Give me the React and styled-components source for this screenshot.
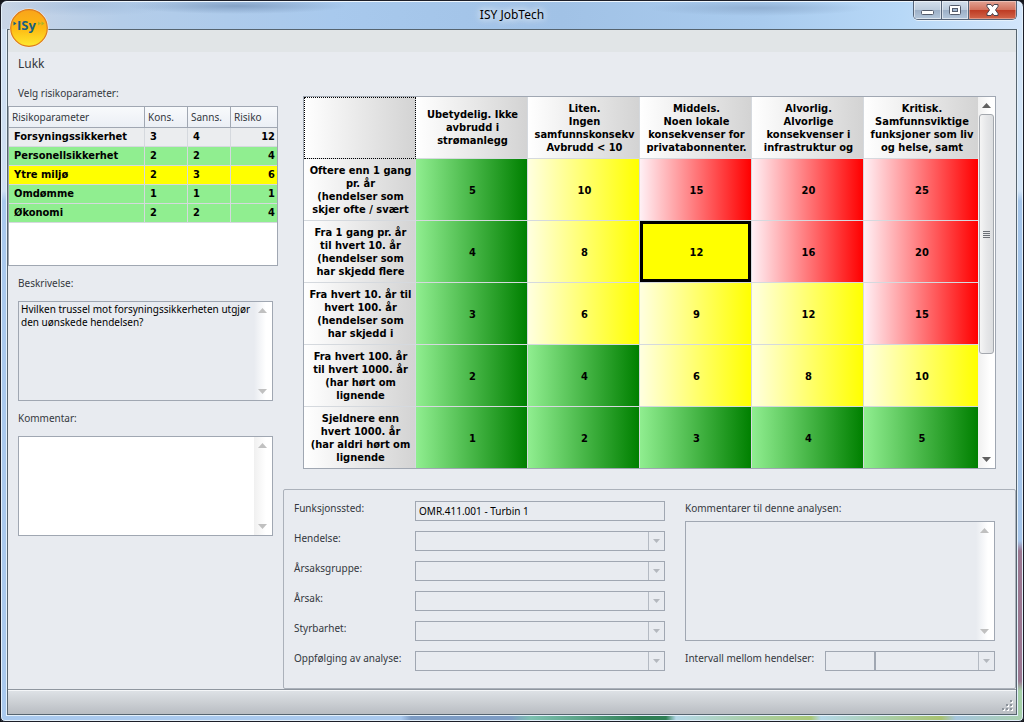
import { useState } from "react";
import styled, { createGlobalStyle, css } from "styled-components";

const risks = [
  { name: "Forsyningssikkerhet", kons: 3, sanns: 4, risiko: 12, color: "#ebedef" },
  { name: "Personellsikkerhet", kons: 2, sanns: 2, risiko: 4, color: "#90ee90" },
  { name: "Ytre miljø", kons: 2, sanns: 3, risiko: 6, color: "#ffff00" },
  { name: "Omdømme", kons: 1, sanns: 1, risiko: 1, color: "#90ee90" },
  { name: "Økonomi", kons: 2, sanns: 2, risiko: 4, color: "#90ee90" },
];

const consequences = [
  "Ubetydelig. Ikke\navbrudd i\nstrømanlegg",
  "Liten.\nIngen\nsamfunnskonsekv\nAvbrudd < 10",
  "Middels.\nNoen lokale\nkonsekvenser for\nprivatabonnenter.",
  "Alvorlig.\nAlvorlige\nkonsekvenser i\ninfrastruktur og",
  "Kritisk.\nSamfunnsviktige\nfunksjoner som liv\nog helse, samt",
];

// g = green, y = yellow, r = red
const matrix = [
  { label: "Oftere enn 1 gang\npr. år\n(hendelser som\nskjer ofte / svært", cells: [[5, "g"], [10, "y"], [15, "r"], [20, "r"], [25, "r"]] },
  { label: "Fra 1 gang pr. år\ntil hvert 10. år\n(hendelser som\nhar skjedd flere", cells: [[4, "g"], [8, "y"], [12, "y"], [16, "r"], [20, "r"]] },
  { label: "Fra hvert 10. år til\nhvert 100. år\n(hendelser som\nhar skjedd i", cells: [[3, "g"], [6, "y"], [9, "y"], [12, "y"], [15, "r"]] },
  { label: "Fra hvert 100. år\ntil hvert 1000. år\n(har hørt om\nlignende", cells: [[2, "g"], [4, "g"], [6, "y"], [8, "y"], [10, "y"]] },
  { label: "Sjeldnere enn\nhvert 1000. år\n(har aldri hørt om\nlignende", cells: [[1, "g"], [2, "g"], [3, "g"], [4, "g"], [5, "g"]] },
];

const selects = [
  ["hendelse", "Hendelse:"],
  ["arsaksgruppe", "Årsaksgruppe:"],
  ["arsak", "Årsak:"],
  ["styrbarhet", "Styrbarhet:"],
  ["oppfolging", "Oppfølging av analyse:"],
];

const fills = {
  g: "linear-gradient(to right, #90ee90, #008000)",
  y: "linear-gradient(to right, #ffffe0, #ffff00)",
  r: "linear-gradient(to right, #fff0f5, #ff0000)",
};

function Logo() {
  return (
    <LogoSvg viewBox="0 0 40 40" role="img" aria-label="ISY">
      <defs>
        <linearGradient id="sun" x1="0" y1="0" x2="0" y2="1">
          <stop offset="0" stopColor="#f9a41a" />
          <stop offset="0.5" stopColor="#fdb913" />
          <stop offset="1" stopColor="#ffe92e" />
        </linearGradient>
      </defs>
      <circle cx="20" cy="20" r="19.5" fill="#f4efe6" />
      <circle cx="20" cy="20" r="18.3" fill="url(#sun)" stroke="#dd7a1c" strokeWidth="1.2" />
      <path d="M4.500 13.500l3 2-3 2z" fill="#17607f" />
      <text x="8" y="22" fill="#17607f">ISy</text>
      <path d="M29 13.500l3 2-3 2zM32.500 13.500l3 2-3 2z" fill="#a9b52a" />
    </LogoSvg>
  );
}

function Arrow({ down }) {
  return (
    <svg width="9" height="5" viewBox="0 0 9 5" aria-hidden="true">
      <path d={down ? "M0 0h9L4.5 5z" : "M0 5h9L4.5 0z"} fill="currentColor" />
    </svg>
  );
}

function Memo({ id, height, white, ...rest }) {
  return (
    <MemoBox $height={height} $white={white}>
      <textarea id={id} {...rest} />
      <MemoScroll $white={white}>
        <Arrow />
        <Arrow down />
      </MemoScroll>
    </MemoBox>
  );
}

function Combo({ id, label }) {
  return (
    <ComboBox>
      <select id={id} aria-label={label} disabled />
      <ComboArrow>
        <svg width="7" height="4" viewBox="0 0 7 4" aria-hidden="true">
          <path d="M0 0h7L3.5 4z" fill="currentColor" />
        </svg>
      </ComboArrow>
    </ComboBox>
  );
}

function App() {
  const [comment, setComment] = useState("");

  return (
    <Window>
      <GlobalStyle />
      <TitleBar>
        <Logo />
        <Title>ISY JobTech</Title>
        <WindowButtons>
          <WindowButton $width={28} aria-label="Minimer">
            <svg width="13" height="12" viewBox="0 0 13 12">
              <rect x="0.5" y="6.5" width="12" height="4" rx="1" fill="#fff" stroke="#545c6c" />
            </svg>
          </WindowButton>
          <WindowButton $width={27} aria-label="Maksimer">
            <svg width="12" height="10" viewBox="0 0 12 10">
              <rect x="0.5" y="0.5" width="11" height="9" rx="1" fill="#fff" stroke="#545c6c" />
              <rect x="3.5" y="3.5" width="5" height="3" fill="#9fb6d0" stroke="#545c6c" />
            </svg>
          </WindowButton>
          <WindowButton $width={47} $close aria-label="Lukk vindu">
            <svg width="13" height="12" viewBox="0 0 13 12">
              <path d="M1 .5h4l1.500 2 1.500-2h4v2L9.500 6l2.500 3.500v2H8l-1.500-2-1.500 2H1v-2L3.500 6 1 2.500z" fill="#fff" stroke="#4b4550" />
            </svg>
          </WindowButton>
        </WindowButtons>
      </TitleBar>

      <Client>
        <Ribbon />
        <MenuBar>
          <MenuItem>Lukk</MenuItem>
        </MenuBar>

        <Main>
          <Side>
            <SideLabel as="h2">Velg risikoparameter:</SideLabel>
            <RiskBox>
              <RiskTable>
                <colgroup>
                  <col />
                  <col width="43" />
                  <col width="43" />
                  <col width="46" />
                </colgroup>
                <thead>
                  <tr>
                    <th>Risikoparameter</th>
                    <th>Kons.</th>
                    <th>Sanns.</th>
                    <th>Risiko</th>
                  </tr>
                </thead>
                <tbody>
                  {risks.map((r) => (
                    <RiskRow key={r.name} $color={r.color}>
                      <td>{r.name}</td>
                      <td>{r.kons}</td>
                      <td>{r.sanns}</td>
                      <td>{r.risiko}</td>
                    </RiskRow>
                  ))}
                </tbody>
              </RiskTable>
            </RiskBox>
            <Field>
              <SideLabel htmlFor="beskrivelse">Beskrivelse:</SideLabel>
              <Memo
                id="beskrivelse"
                height={100}
                readOnly
                value="Hvilken trussel mot forsyningssikkerheten utgjør den uønskede hendelsen?"
              />
            </Field>
            <Field>
              <SideLabel htmlFor="kommentar">Kommentar:</SideLabel>
              <Memo
                id="kommentar"
                height={100}
                white
                value={comment}
                onChange={(e) => setComment(e.target.value)}
              />
            </Field>
          </Side>

          <Content>
            <MatrixBox>
              <MatrixTable>
                <colgroup>
                  <col width="112" />
                  <col width="112" />
                  <col width="112" />
                  <col width="112" />
                  <col width="112" />
                  <col />
                </colgroup>
                <thead>
                  <tr>
                    <CornerCell />
                    {consequences.map((c) => (
                      <HeadCell key={c} scope="col">{c}</HeadCell>
                    ))}
                  </tr>
                </thead>
                <tbody>
                  {matrix.map((row) => (
                    <tr key={row.label}>
                      <HeadCell scope="row">{row.label}</HeadCell>
                      {row.cells.map(([value, level], i) => (
                        <RiskCell
                          key={i}
                          $level={level}
                          $selected={level === "y" && value === 12 && i === 2}
                        >
                          {value}
                        </RiskCell>
                      ))}
                    </tr>
                  ))}
                </tbody>
              </MatrixTable>
              <ScrollBar>
                <Arrow />
                <ScrollTrack>
                  <ScrollThumb>
                    <i />
                    <i />
                    <i />
                    <i />
                  </ScrollThumb>
                </ScrollTrack>
                <Arrow down />
              </ScrollBar>
            </MatrixBox>

            <Panel>
              <FormColumn>
                <FormRow>
                  <label htmlFor="funksjonssted">Funksjonssted:</label>
                  <TextBox id="funksjonssted" readOnly value="OMR.411.001 - Turbin 1" />
                </FormRow>
                {selects.map(([id, label]) => (
                  <FormRow key={id}>
                    <label htmlFor={id}>{label}</label>
                    <Combo id={id} />
                  </FormRow>
                ))}
              </FormColumn>
              <NotesColumn>
                <label htmlFor="notater">Kommentarer til denne analysen:</label>
                <Memo id="notater" height={120} readOnly value="" />
                <IntervalRow>
                  <label htmlFor="intervall">Intervall mellom hendelser:</label>
                  <TextBox id="intervall" readOnly value="" />
                  <Combo id="enhet" label="Enhet" />
                </IntervalRow>
              </NotesColumn>
            </Panel>
          </Content>
        </Main>

        <StatusBar>
          <svg width="12" height="12" viewBox="0 0 12 12" aria-hidden="true">
            <path d="M9 1h2v2H9zM5 5h2v2H5zM9 5h2v2H9zM1 9h2v2H1zM5 9h2v2H5zM9 9h2v2H9z" fill="#fff" />
            <path d="M8 0h2v2H8zM4 4h2v2H4zM8 4h2v2H8zM0 8h2v2H0zM4 8h2v2H4zM8 8h2v2H8z" fill="#8d949c" />
          </svg>
        </StatusBar>
      </Client>
    </Window>
  );
}

const GlobalStyle = createGlobalStyle`
  * {
    box-sizing: border-box;
  }

  body {
    margin: 0;
    background: #14161c;
    color: #34383e;
    font-family: "Noto Sans", "Open Sans", sans-serif;
    font-size: 10px;
    line-height: 15px;
  }

  button, input, select, textarea {
    font: inherit;
    color: #000;
    margin: 0;
  }

  table {
    border-collapse: separate;
    border-spacing: 0;
    table-layout: fixed;
    width: 100%;
  }

  th, td {
    padding: 0;
  }
`;

const Window = styled.div`
  display: flex;
  flex-direction: column;
  min-height: 100vh;
  padding: 0 6px 6px;
  border: 1px solid #1c1e28;
  border-radius: 7px 7px 5px 5px;
  box-shadow: inset 0 0 0 1px #e4f0fa;
  background:
    linear-gradient(to right, #a9c9ee 0 400px, #7d9cc4 410px 510px, #7dc0b0 530px, #2f7f55 640px 665px, #b5d8e8 675px, #a9cfae 740px, #a9c878 810px, #b5d8e8 820px, #a9cfae 880px, #a8c270 940px, #a6c6de 955px, #a9cfae) bottom / 100% 7px no-repeat,
    linear-gradient(to bottom, #d3e5f8 0 190px, #a5c5ea 200px 540px, #9b7892 550px 680px, #a6d0a9 690px) right / 7px 100% no-repeat,
    linear-gradient(to bottom, #cfdff2 0 190px, #a9c9ee 200px) left / 7px 100% no-repeat,
    #a9c9ee;
`;

const TitleBar = styled.header`
  position: relative;
  display: flex;
  justify-content: center;
  height: 28px;
  margin: 0 -5px;
  padding-top: 5px;
  border-radius: 6px 6px 0 0;
  border-top: 1px solid #eef6fd;
  background:
    radial-gradient(ellipse 90px 10px at 85px 4px, #8facd066, transparent),
    radial-gradient(ellipse 110px 8px at 235px 4px, #7593b8bb, transparent),
    radial-gradient(ellipse 110px 8px at 755px 6px, #8ba9cccc, transparent),
    linear-gradient(to right, #c9d5e6, #b4cde9 120px, #a8c9ed 330px, #a1c2e6 560px, #a9cbee 760px, #b7d8f7 900px, #d3e6fb);
`;

const LogoSvg = styled.svg`
  position: absolute;
  z-index: 1;
  left: 7px;
  top: 6px;
  width: 40px;
  height: 40px;

  text {
    font: bold 13px "Open Sans", "Noto Sans", sans-serif;
  }
`;

const Title = styled.h1`
  margin: 0;
  color: #000;
  font: 12px/16px "Noto Sans", "Open Sans", sans-serif;
  text-shadow: 0 0 6px #fff, 0 0 10px #fff;
`;

const WindowButtons = styled.div`
  position: absolute;
  right: 5px;
  top: -1px;
  display: flex;
  border: 1px solid #566478;
  border-top: 0;
  border-radius: 0 0 5px 5px;
  overflow: hidden;
  box-shadow: 0 1px 0 #e6f1fb;
`;

const WindowButton = styled.button`
  display: flex;
  align-items: center;
  justify-content: center;
  width: ${({ $width }) => $width}px;
  height: 18px;
  padding: 0;
  border: 0;
  border-right: 1px solid #566478;
  box-shadow: inset 0 0 0 1px #ffffff88;
  background: linear-gradient(#d3dfec, #bccbdc 50%, #9cafc6 50%, #b4c7dc);

  ${({ $close }) =>
    $close &&
    css`
      border-right: 0;
      box-shadow: inset 0 0 0 1px #ffffff55;
      background: linear-gradient(#e2a293, #d1705c 50%, #bd3a22 50%, #d2664b);
    `}
`;

const Client = styled.div`
  display: flex;
  flex-direction: column;
  flex: 1;
  border: 1px solid #56646f;
  background: #e8ebf0;
  box-shadow: 0 0 0 1px #e4f0fa;
`;

const Ribbon = styled.div`
  height: 22px;
  background: #e1e5e7;
`;

const MenuBar = styled.nav`
  height: 24px;
  padding: 4px 10px;
`;

const MenuItem = styled.button`
  padding: 0;
  border: 0;
  background: none;
  color: #33373d;
  font: 12px/16px "Noto Sans", "Open Sans", sans-serif;
`;

const Main = styled.main`
  display: flex;
  flex: 1;
`;

const Side = styled.section`
  width: 275px;
  padding-top: 10px;
`;

const SideLabel = styled.label`
  display: block;
  margin: 0;
  padding-left: 10px;
  font-size: 10px;
  font-weight: normal;
`;

const RiskBox = styled.div`
  width: 270px;
  height: 160px;
  margin-top: 5px;
  border: 1px solid #a0a7b2;
  background: #fff;
`;

const RiskTable = styled.table`
  th {
    height: 21px;
    padding-left: 3px;
    border-right: 1px solid #a0a7b2;
    border-bottom: 1px solid #a0a7b2;
    background: linear-gradient(#f8fafc, #ebeff5);
    font-weight: normal;
    text-align: left;
  }

  td {
    height: 19px;
    padding: 0 0 2px 5px;
    border-right: 1px solid #d5d9de;
    border-bottom: 1px solid #d5d9de;
    color: #000;
    font-family: "DejaVu Sans Condensed", "DejaVu Sans", sans-serif;
    font-size: 11px;
    font-weight: bold;
  }

  th:last-child,
  td:last-child {
    border-right: 0;
  }

  td:last-child {
    padding-right: 2px;
    text-align: right;
  }
`;

const RiskRow = styled.tr`
  background: ${({ $color }) => $color};
`;

const Field = styled.div`
  display: flex;
  flex-direction: column;
  gap: 10px;
  margin-top: 10px;

  > div {
    margin: 0 10px;
  }
`;

const MemoBox = styled.div`
  display: flex;
  height: ${({ $height }) => $height}px;
  border: 1px solid #a0a7b2;
  background: ${({ $white }) => ($white ? "#fff" : "#e8ebf0")};

  textarea {
    flex: 1;
    min-width: 0;
    padding: 1px 0 0 2px;
    border: 0;
    outline: 0;
    resize: none;
    overflow: hidden;
    background: none;
    line-height: 13px;
  }
`;

const MemoScroll = styled.div`
  display: flex;
  flex-direction: column;
  align-items: center;
  justify-content: space-between;
  width: 18px;
  padding: 6px 1px 6px 0;
  background: linear-gradient(to right, ${({ $white }) => ($white ? "#f0f0f0" : "#e8ebf0")}, #fff 12px);
  color: #c0c0c0;
`;

const Content = styled.section`
  display: flex;
  flex-direction: column;
  flex: 1;
  min-width: 0;
  padding-top: 20px;
`;

const MatrixBox = styled.div`
  display: flex;
  margin: 0 20px;
  border: 1px solid #a0a7b2;
  background: #fff;
`;

const MatrixTable = styled.table`
  flex: 1;
  min-width: 0;
  color: #000;
  font-family: "DejaVu Sans Condensed", "DejaVu Sans", sans-serif;
  font-size: 11px;
  font-weight: bold;
  line-height: 13px;
  text-align: center;

  th, td {
    height: 62px;
    padding-left: 2px;
    border-right: 1px solid #d5d9de;
    border-bottom: 1px solid #d5d9de;
    background-clip: padding-box;
    white-space: pre;
    overflow: hidden;
  }

  tbody td {
    padding-top: 2px;
  }

  tr > :last-child {
    border-right: 0;
  }

  tbody tr:last-child > * {
    height: 61px;
    border-bottom: 0;
  }
`;

const HeadCell = styled.th`
  background: linear-gradient(to right, #fff, #d3d3d3);
`;

const CornerCell = styled.td`
  background: linear-gradient(to right, #fff, #d3d3d3);
  outline: 1px dotted #000;
  outline-offset: -1px;
`;

const RiskCell = styled.td`
  background: ${({ $level }) => fills[$level]};

  ${({ $selected }) =>
    $selected &&
    css`
      background: #ffff00;
      box-shadow: inset 0 0 0 3px #000;
    `}
`;

const ScrollBar = styled.div`
  display: flex;
  flex-direction: column;
  align-items: center;
  width: 17px;
  padding: 6px 0;
  background: linear-gradient(to right, #f0f0f0, #fff 12px);
  color: #606060;
`;

const ScrollTrack = styled.div`
  flex: 1;
  padding: 6px 0;
`;

const ScrollThumb = styled.div`
  display: flex;
  flex-direction: column;
  align-items: center;
  justify-content: center;
  gap: 1px;
  width: 15px;
  height: 240px;
  border: 1px solid #a4a8ae;
  border-radius: 3px;
  background: linear-gradient(to right, #f5f5f5, #e6e7e9 50%, #dcdee0);

  i {
    width: 7px;
    height: 1px;
    background: #6c7076;
  }
`;

const Panel = styled.form`
  display: grid;
  grid-template-columns: 371px 1fr;
  gap: 20px;
  flex: 1;
  margin-top: 20px;
  padding: 11px 20px 16px 10px;
  border: 1px solid #abb1ba;
  border-radius: 2px;
`;

const FormColumn = styled.div`
  display: flex;
  flex-direction: column;
  gap: 10px;
`;

const FormRow = styled.div`
  display: grid;
  grid-template-columns: 121px 1fr;
`;

const TextBox = styled.input`
  width: 100%;
  height: 20px;
  padding: 0 3px;
  border: 1px solid #a0a7b2;
  border-radius: 0;
  outline: 0;
  background: #e8ebf0;
`;

const ComboBox = styled.div`
  position: relative;
  height: 20px;

  select {
    display: block;
    width: 100%;
    height: 20px;
    border: 1px solid #a0a7b2;
    border-radius: 0;
    background: #e8ebf0;
    opacity: 1;
    appearance: none;
  }
`;

const ComboArrow = styled.span`
  position: absolute;
  top: 1px;
  right: 1px;
  bottom: 1px;
  display: flex;
  align-items: center;
  justify-content: center;
  width: 16px;
  border-left: 1px solid #b4bac3;
  color: #b4b8be;
  pointer-events: none;
`;

const NotesColumn = styled.div`
  display: flex;
  flex-direction: column;

  > div:first-of-type {
    margin-top: 5px;
  }
`;

const IntervalRow = styled.div`
  display: grid;
  grid-template-columns: 140px 50px 1fr;
  margin-top: 10px;
`;

const StatusBar = styled.footer`
  display: flex;
  align-items: flex-end;
  justify-content: flex-end;
  height: 25px;
  padding: 2px;
  border-top: 1px solid #8f969f;
  box-shadow: inset 0 1px 0 #f4f6f8;
  background: linear-gradient(#dfe3e7, #b9bdc2);
`;

export default App;
